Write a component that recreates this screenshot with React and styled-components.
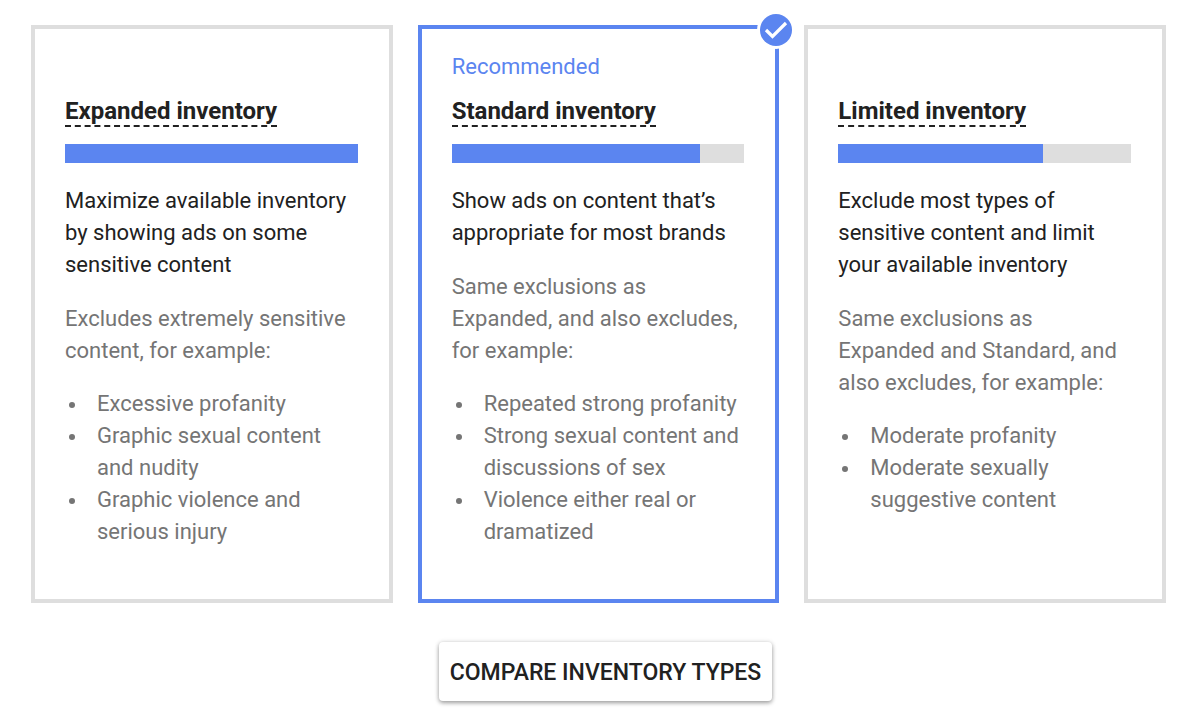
import React, { useState } from 'react';
import styled, { createGlobalStyle } from 'styled-components';

const inventoryTypes = [
    {
        id: 'expanded',
        title: 'Expanded inventory',
        level: 100,
        summary: 'Maximize available inventory by showing ads on some sensitive content',
        excludes: 'Excludes extremely sensitive content, for example:',
        examples: [
            'Excessive profanity',
            'Graphic sexual content and nudity',
            'Graphic violence and serious injury',
        ],
    },
    {
        id: 'standard',
        title: 'Standard inventory',
        level: 85,
        recommended: true,
        summary: 'Show ads on content that’s appropriate for most brands',
        excludes: 'Same exclusions as Expanded, and also excludes, for example:',
        examples: [
            'Repeated strong profanity',
            'Strong sexual content and discussions of sex',
            'Violence either real or dramatized',
        ],
    },
    {
        id: 'limited',
        title: 'Limited inventory',
        level: 70,
        summary: 'Exclude most types of sensitive content and limit your available inventory',
        excludes: 'Same exclusions as Expanded and Standard, and also excludes, for example:',
        examples: ['Moderate profanity', 'Moderate sexually suggestive content'],
    },
];

const App = () => {
    const [selected, setSelected] = useState('standard');

    return (
        <Page>
            <GlobalStyle />
            <Cards>
                {inventoryTypes.map((type) => (
                    <Card key={type.id} $selected={type.id === selected}>
                        <CardRadio
                            type='radio'
                            name='inventory'
                            value={type.id}
                            checked={type.id === selected}
                            onChange={() => setSelected(type.id)}
                            aria-labelledby={`${type.id}-title`}
                        />
                        {type.id === selected && (
                            <Badge viewBox='0 0 38 38' aria-hidden='true'>
                                <circle cx='19' cy='19' r='19' fill='#fff' />
                                <circle cx='19' cy='19' r='16' fill='#5b85f0' />
                                <path d='M9 19l6.5 6.5L29 12' fill='none' stroke='#fff' strokeWidth='3.2' />
                            </Badge>
                        )}
                        <Tag>{type.recommended && 'Recommended'}</Tag>
                        <Title>
                            <span id={`${type.id}-title`}>{type.title}</span>
                        </Title>
                        <Meter>
                            <MeterFill style={{ width: `${type.level}%` }} />
                        </Meter>
                        <Summary>{type.summary}</Summary>
                        <Excludes>{type.excludes}</Excludes>
                        <Examples>
                            {type.examples.map((example) => (
                                <Example key={example}>{example}</Example>
                            ))}
                        </Examples>
                    </Card>
                ))}
            </Cards>
            <Footer>
                <CompareButton type='button'>COMPARE INVENTORY TYPES</CompareButton>
            </Footer>
        </Page>
    );
};

const GlobalStyle = createGlobalStyle`
    * {
        box-sizing: border-box;
    }

    body {
        margin: 0;
        background: #fff;
        color: #212121;
        font-family: Roboto, sans-serif;
        font-size: 22px;
        line-height: 32px;
    }
`;

const Page = styled.main`
    padding: 25px 34px 20px 31px;
`;

const Cards = styled.div`
    display: grid;
    grid-template-columns: repeat(3, minmax(0, 1fr));
    gap: 25px;
`;

const Card = styled.section`
    position: relative;
    padding: 22px 31px 51px 30px;
    border: 4px solid ${({ $selected }) => ($selected ? '#5b85f0' : '#dedede')};
`;

const CardRadio = styled.input`
    position: absolute;
    inset: 0;
    width: 100%;
    height: 100%;
    margin: 0;
    opacity: 0;
    cursor: pointer;
`;

const Badge = styled.svg`
    position: absolute;
    top: -18px;
    right: -20px;
    width: 38px;
    height: 38px;
`;

const Tag = styled.div`
    min-height: 32px;
    color: #5b85f0;
`;

const Title = styled.h2`
    margin: 12px 0 17px;
    font-size: 24px;
    font-weight: 700;
    line-height: 32px;

    span {
        border-bottom: 2px dashed #212121;
    }
`;

const Meter = styled.div`
    height: 19px;
    background: #dedede;
`;

const MeterFill = styled.div`
    height: 100%;
    background: #5b85f0;
`;

const Summary = styled.p`
    margin: 22px 0 0;
`;

const Excludes = styled.p`
    margin: 22px 0 0;
    color: #757575;
`;

const Examples = styled.ul`
    margin: 21px 0 0;
    padding: 0;
    list-style: none;
    color: #757575;
`;

const Example = styled.li`
    display: flex;

    &::before {
        content: '';
        flex: none;
        width: 6px;
        height: 6px;
        margin: 14px 22px 0 4px;
        border-radius: 50%;
        background: currentColor;
    }
`;

const Footer = styled.footer`
    display: flex;
    justify-content: center;
    margin-top: 39px;
    padding-left: 14px;
`;

const CompareButton = styled.button`
    padding: 15px 11px 12px;
    border: 0;
    border-radius: 4px;
    background: #fff;
    box-shadow: 0 2px 4px rgba(0, 0, 0, 0.34), 0 0 5px rgba(0, 0, 0, 0.12);
    color: #212121;
    font-family: inherit;
    font-size: 23px;
    font-weight: 500;
    line-height: 32px;
    cursor: pointer;
`;

export default App;
